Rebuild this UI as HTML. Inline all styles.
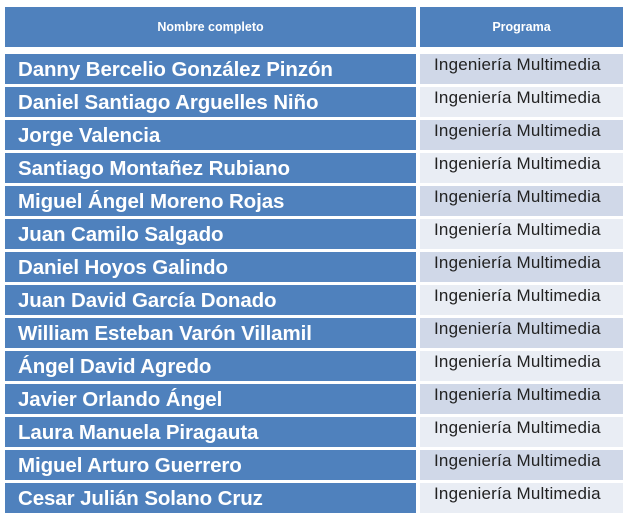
<!DOCTYPE html>
<html><head><style>
body{margin:0;width:627px;height:515px;background:#fff;font-family:"Liberation Sans",sans-serif;position:relative;overflow:hidden}
.c{position:absolute}
.h{background:#4f81bd;color:#fff;font-weight:bold;font-size:12.5px;text-align:center;line-height:40px;top:7px;height:40px}
.n{background:#4f81bd;color:#fff;font-weight:bold;font-size:20.5px;left:5px;width:411px;height:30px;line-height:31px;padding-left:13px;box-sizing:border-box;letter-spacing:-0.1px;white-space:nowrap}
.p{left:420px;width:203px;height:30px;font-size:17px;color:#222;padding-left:14px;padding-top:1px;box-sizing:border-box;line-height:20px;letter-spacing:0.2px;white-space:nowrap}
.a{background:#d0d8e8}.b{background:#e9edf4}
</style></head><body>
<div class="c h" style="left:5px;width:411px">Nombre completo</div>
<div class="c h" style="left:420px;width:203px">Programa</div>
<div class="c n" style="top:54px">Danny Bercelio González Pinzón</div><div class="c p a" style="top:54px">Ingeniería Multimedia</div>
<div class="c n" style="top:87px">Daniel Santiago Arguelles Niño</div><div class="c p b" style="top:87px">Ingeniería Multimedia</div>
<div class="c n" style="top:120px">Jorge Valencia</div><div class="c p a" style="top:120px">Ingeniería Multimedia</div>
<div class="c n" style="top:153px">Santiago Montañez Rubiano</div><div class="c p b" style="top:153px">Ingeniería Multimedia</div>
<div class="c n" style="top:186px">Miguel Ángel Moreno Rojas</div><div class="c p a" style="top:186px">Ingeniería Multimedia</div>
<div class="c n" style="top:219px">Juan Camilo Salgado</div><div class="c p b" style="top:219px">Ingeniería Multimedia</div>
<div class="c n" style="top:252px">Daniel Hoyos Galindo</div><div class="c p a" style="top:252px">Ingeniería Multimedia</div>
<div class="c n" style="top:285px">Juan David García Donado</div><div class="c p b" style="top:285px">Ingeniería Multimedia</div>
<div class="c n" style="top:318px">William Esteban Varón Villamil</div><div class="c p a" style="top:318px">Ingeniería Multimedia</div>
<div class="c n" style="top:351px">Ángel David Agredo</div><div class="c p b" style="top:351px">Ingeniería Multimedia</div>
<div class="c n" style="top:384px">Javier Orlando Ángel</div><div class="c p a" style="top:384px">Ingeniería Multimedia</div>
<div class="c n" style="top:417px">Laura Manuela Piragauta</div><div class="c p b" style="top:417px">Ingeniería Multimedia</div>
<div class="c n" style="top:450px">Miguel Arturo Guerrero</div><div class="c p a" style="top:450px">Ingeniería Multimedia</div>
<div class="c n" style="top:483px">Cesar Julián Solano Cruz</div><div class="c p b" style="top:483px">Ingeniería Multimedia</div>
</body></html>
